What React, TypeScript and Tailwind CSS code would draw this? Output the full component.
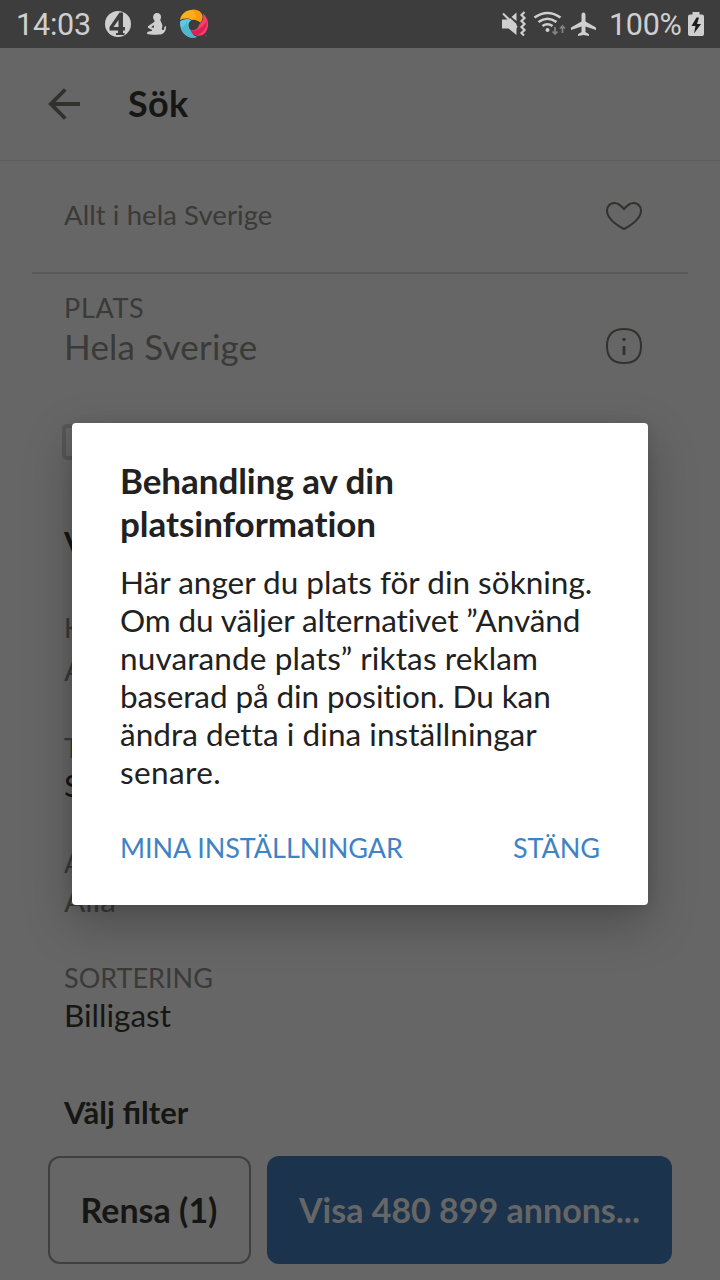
const label = 'text-[27px] leading-[30px] text-[#3a3a38]';
const value = 'text-[31.5px] leading-[45px]';

function StatusBar() {
  return (
    <div className="flex h-12 items-center bg-[#3d3d3d] pl-[16px] font-[Roboto,sans-serif] text-[30.5px] text-[#cfcfcf]">
      <span className="w-[89px] pt-[2px] leading-[48px] tracking-[-0.2px]">14:03</span>
      <svg className="h-12 w-[110px]" viewBox="105 0 110 48">
        <circle cx="118" cy="24" r="13" fill="#cfcfcf" />
        <path d="M123 12.500h-3.500L109.500 27v3.500h8.500V33h-2v2h8.500v-2H123v-2.500h2V27h-2ZM118.500 20v7h-5Z" fill="#3d3d3d" fillRule="evenodd" />
        <path d="M157 13c2.600 0 4.200 1.900 4 4.200-.1 1.500-1 2.600-.5 3.500l1.500 3.300c.8 1.700.2 3.300-.3 5l1.300 1.200c1.200-.6 1.600-1.800 1.200-3.300l1.800-1c.5 5-2.700 8.900-7.300 8.700-4 .6-9 .2-12-1.200.8-1.800 2.600-2.400 5-2.500l.5-1-4.200-2.200v-1.500l6.500-4.500c.3-1.300-.8-2.200-1.300-3.500-.5-2.600 1.200-5.200 3.800-5.200Zm-3 12-3 2.200 2.800.8Z" fill="#cfcfcf" fillRule="evenodd" />
        <path d="M180 20c1-6.500 7-10.600 14-10.200 3.800.2 7 2.300 8.300 5.700.3 2.700-.5 5-2 7-2.300-2.300-5.200-3.300-8.500-2.500-3.300-2-7.800-1.800-11.800 0Z" fill="#fbae17" />
        <path d="M192 10c5.500-.8 9.500 1.800 10.300 5.500.3 2.700-.5 5-2 7-1.500-1.500-3-2.300-5-2.600 1.500-3.600.2-7-3.300-9.900Z" fill="#ff9a08" />
        <path d="M203 13.500c6 5 6.600 13.500 2.500 19-3.200 4-9.500 4.300-13.500.8l-1.300-3c4.200 0 7.500-2.300 8.700-6 3.400-2.700 4.500-6.600 3.600-10.800Z" fill="#f5406a" />
        <path d="M206.500 21c.8 5-2 10-7.500 13.500-2.600.6-5 .2-7-1.200l-1.300-3c3 1 6.700.2 9.300-2 3-1.600 5-4 6.500-7.300Z" fill="#dc1f55" />
        <path d="M180 21.500c3-2.500 7.500-3.400 11.500-1.500-3 3-3.600 7-1 10.300.8 3.300 3 5.900 6.500 6.700-9 3-17.600-4-17-15.500Z" fill="#65c8dd" />
        <path d="M181 28c3-1.200 5-3.800 5.500-7.200 1 5 1.500 7.600 4 9.500.8 3.300 3 5.900 6.500 6.700-7 2-13-1.500-16-9Z" fill="#4db6d0" />
        <circle cx="193.500" cy="25" r="5" fill="#3d3d3d" />
        <path d="M205 35.500h2" stroke="#b3294d" />
      </svg>
      <svg className="ml-[285px] h-12 w-[100px]" viewBox="500 0 100 48" fill="none" stroke="#cfcfcf">
        <path d="M502 19.500h5l3.500-1.200L516.500 24v11l-8-6.500H502ZM511.500 17l5-4.500V21Z" fill="#cfcfcf" stroke="none" />
        <path d="m503 13.500 14 14" strokeWidth="2" />
        <path d="m524.500 12-3 3 3 3-3 3 3 3-3 3 3 3-3 3 2.500 2.500" strokeWidth="2.200" />
        <path d="M534.500 17.500q13-9 26 0M538.500 22q9-6.500 18 0M542.500 26q5-3.500 10 0" strokeWidth="2.600" />
        <circle cx="547.500" cy="30" r="2" fill="#cfcfcf" stroke="none" />
        <path d="M555 27v7m-2.500-2.500 2.500 2.500 2.500-2.500M562.500 33v-7m-2.500 2.500 2.500-2.500 2.500 2.500" stroke="#858585" strokeWidth="1.700" />
        <path d="M583.500 12.500c1.500 0 2 1.300 2 3v6l10.500 6V30l-10.500-3.500v5.500l3.500 2.200V36l-5.500-1-5.500 1v-1.800l3.500-2.200v-5.500L571 30v-2.500l10.500-6v-6c0-1.700.5-3 2-3Z" fill="#cfcfcf" stroke="none" />
      </svg>
      <span className="ml-[9px] w-[75px] pt-[2px] leading-[48px] tracking-[-0.3px]">100%</span>
      <svg className="ml-[4px] h-12 w-[16px] shrink-0" viewBox="0 0 16 48">
        <path d="M4.500 12h7v2.500H14q2 0 2 2V34q0 2-2 2H2q-2 0-2-2V16.500q0-2 2-2h2.500Z" fill="#cfcfcf" />
        <path d="M8.500 17.500 3.500 26h4l-1.500 7.500 7-9.500H9l2-6.500Z" fill="#1c1c1c" />
      </svg>
    </div>
  );
}

function Header() {
  return (
    <header className="flex h-[113px] items-center border-b border-[#5e5e5e] pl-12">
      <svg className="h-8 w-8" viewBox="0 0 32 32" fill="none" stroke="#31312f" strokeWidth="3.800">
        <path d="M32 16H3M17.300 1.500 2.800 16l14.500 14.500" />
      </svg>
      <h1 className="ml-12 pb-[3px] text-[36px] leading-[48px] font-bold tracking-[0.3px] text-[#161614]">Sök</h1>
    </header>
  );
}

function Field({ name, text, dark }: { name: string; text: string; dark?: boolean }) {
  return (
    <div className="mt-10">
      <div className={label}>{name}</div>
      <div className={`${value} ${dark ? 'text-[#161614]' : 'text-[#3a3a38]'}`}>{text}</div>
    </div>
  );
}

function Dialog() {
  return (
    <div
      role="dialog"
      className="absolute top-[423px] left-[72px] flex h-[482px] w-[576px] flex-col rounded-[4px] bg-white px-12 pt-[36px] text-[#212121] shadow-[0_18px_48px_rgba(0,0,0,0.26),0_2px_12px_rgba(0,0,0,0.1)]"
    >
      <h2 className="text-[35px] leading-[43px] font-bold whitespace-nowrap">
        <span className="block tracking-[-0.06px]">Behandling av din</span>
        <span className="block tracking-[-0.04px]">platsinformation</span>
      </h2>
      <p className="mt-[18px] text-[31.5px] leading-[38px] whitespace-nowrap">
        <span className="block tracking-[0.01px]">Här anger du plats för din sökning.</span>
        <span className="block tracking-[-0.12px]">Om du väljer alternativet ”Använd</span>
        <span className="block tracking-[0.13px]">nuvarande plats” riktas reklam</span>
        <span className="block tracking-[-0.09px]">baserad på din position. Du kan</span>
        <span className="block tracking-[0.05px]">ändra detta i dina inställningar</span>
        <span className="block tracking-[0.4px]">senare.</span>
      </p>
      <div className="mt-[42px] flex justify-between text-[27px] leading-[30px] tracking-[-0.06px] text-[#3f83c6]">
        <button>MINA INSTÄLLNINGAR</button>
        <button>STÄNG</button>
      </div>
    </div>
  );
}

export default function App() {
  return (
    <div className="relative h-[1280px] w-[720px] overflow-hidden bg-[#666] font-[Lato,sans-serif]">
      <StatusBar />
      <Header />
      <div className="mx-8 flex h-[113px] items-center justify-between border-b-2 border-[#595959] pr-[46px] pb-[1px] pl-8">
        <span className="pb-[2px] text-[27.5px] leading-[30px] tracking-[0.08px] text-[#3a3a38]">Allt i hela Sverige</span>
        <svg className="h-[28px] w-9" viewBox="0 0 36 28" fill="none" stroke="#31312f" strokeWidth="2">
          <path d="M18 7C14.500 3 11.500 1 8.500 1 4.500 1 1 4 1 8.500 1 16 9.500 22.500 18 27 26.500 22.500 35 16 35 8.500 35 4 31.500 1 27.500 1 24.500 1 21.500 3 18 7Z" />
        </svg>
      </div>
      <main className="pl-16">
        <div className="flex justify-between pt-[19px] pr-[78px]">
          <div>
            <div className={`${label} tracking-[0.7px]`}>PLATS</div>
            <div className="text-[35px] leading-[47px] tracking-[0.2px] text-[#3a3a38]">Hela Sverige</div>
          </div>
          <svg className="mt-[35px] h-9 w-9" viewBox="0 0 36 36" fill="none" stroke="#31312f" strokeWidth="2">
            <path d="M18 1C29.500 1 35 6.500 35 18S29.500 35 18 35 1 29.500 1 18 6.500 1 18 1Z" />
            <circle cx="18" cy="11.500" r="1.800" fill="#31312f" stroke="none" />
            <path d="M18 18v9" strokeWidth="2.800" />
          </svg>
        </div>
        <div className="mt-[54px] -ml-0.5 h-9 w-9 rounded-[5px] border-4 border-[#575757]" />
        <h2 className="mt-[67px] text-[31px] leading-[30px] font-bold text-[#161614]">V</h2>
        <div className="mt-[56px]">
          <div className={label}>K</div>
          <div className="text-[31.5px] leading-[53px] text-[#3a3a38]">A</div>
        </div>
        <div className="-mt-[3px]">
          <Field name="T" text="S" dark />
        </div>
        <Field name="A" text="Alla" />
        <Field name="SORTERING" text="Billigast" dark />
        <h2 className="mt-[59px] text-[31px] leading-[30px] font-bold text-[#161614]">Välj filter</h2>
      </main>
      <div className="mt-[29px] flex h-[108px] gap-4 px-12 text-[34px] font-bold whitespace-nowrap">
        <button className="w-[203px] rounded-[12px] border-2 border-[#3f3f3f] pr-[1px] pb-[2px] text-[#161614]">Rensa (1)</button>
        <button className="w-[405px] rounded-[12px] bg-[#1b334c] pb-[2px] text-[#666]">Visa 480 899 annons...</button>
      </div>
      <Dialog />
    </div>
  );
}
